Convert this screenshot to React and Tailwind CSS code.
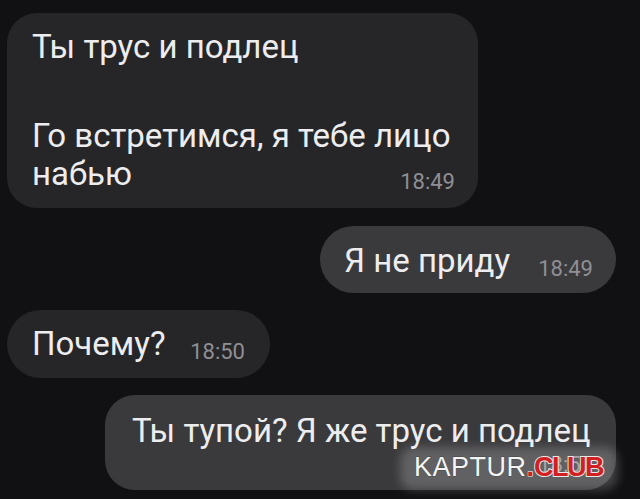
import React from 'react';

const font = { fontFamily: 'Roboto, "Noto Sans", sans-serif' };

const Time = ({ children }) => (
  <span className="text-[22px] leading-[22px] text-[#8f8f94] shrink-0">{children}</span>
);

export default function App() {
  return (
    <div
      className="relative w-[640px] h-[499px] overflow-hidden bg-[#111114] flex flex-col pt-[13px] pl-[7px] pr-[24px] text-[#ededef]"
      style={font}
    >
      {/* incoming, multi-line */}
      <div className="w-[471px] h-[195px] rounded-[30px] bg-[#262629] pt-[15px] pl-[25px] pr-[23px] flex flex-col">
        <div className="text-[33px] leading-[38px]">Ты трус и подлец</div>
        <div className="text-[33px] leading-[38px] mt-[51px]">Го встретимся, я тебе лицо</div>
        <div className="flex items-end justify-between">
          <span className="text-[33px] leading-[38px]">набью</span>
          <Time>18:49</Time>
        </div>
      </div>

      {/* outgoing */}
      <div className="self-end mt-[18px] w-[296px] h-[67px] rounded-full bg-[#3a3a3d] pt-[16px] pl-[24px] pr-[23px]">
        <div className="flex items-end justify-between w-full">
          <span className="text-[33px] leading-[38px]">Я не приду</span>
          <Time>18:49</Time>
        </div>
      </div>

      {/* incoming */}
      <div className="mt-[17px] w-[263px] h-[68px] rounded-full bg-[#262629] pt-[15px] pl-[25px] pr-[25px]">
        <div className="flex items-end justify-between w-full">
          <span className="text-[33px] leading-[38px]">Почему?</span>
          <Time>18:50</Time>
        </div>
      </div>

      {/* outgoing, time on second row */}
      <div className="self-end mt-[17px] w-[511px] h-[95px] rounded-[30px] bg-[#3a3a3d] pt-[17px] pl-[27px] pr-[23px] flex flex-col">
        <span className="text-[33px] leading-[38px] whitespace-nowrap">Ты тупой? Я же трус и подлец</span>
        <div className="flex justify-end mt-[4px]">
          <Time>18:50</Time>
        </div>
      </div>

      {/* watermark */}
      <div className="absolute left-[400px] top-[447px] w-[218px] h-[43px] rounded-[14px] bg-white/20 blur-[5px]" />
      <div
        className="absolute left-[414px] top-[450px] flex items-baseline leading-[34px]"
        style={{ fontFamily: '"Liberation Sans", Arial, sans-serif' }}
      >
        <span className="text-[27px] tracking-[0.5px] text-[#f4f4f4] [-webkit-text-stroke:1px_#4a4a4a] [paint-order:stroke_fill]">
          KAPTUR
        </span>
        <span className="text-[27px] font-bold text-[#d21f22] [-webkit-text-stroke:1px_#eeeeee] [paint-order:stroke_fill]">.</span>
        <span className="text-[27px] font-bold tracking-[-1.5px] text-[#d21f22] [-webkit-text-stroke:2px_#e8e8e8] [paint-order:stroke_fill]">
          CLUB
        </span>
      </div>
    </div>
  );
}
